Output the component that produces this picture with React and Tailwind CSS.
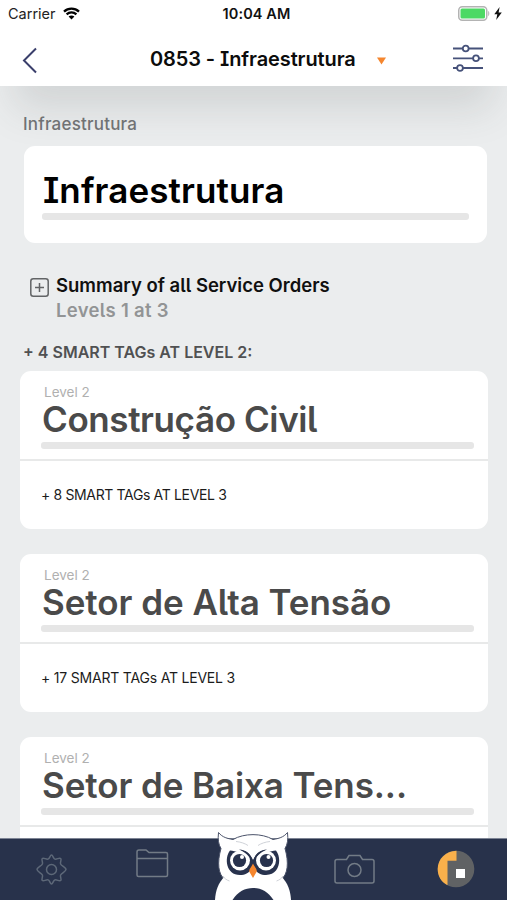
import React from "react";

const plex = "font-['Inter','Noto_Sans',sans-serif] [font-feature-settings:'cv08','cv05'] whitespace-nowrap";
const sys = "font-['Inter','Liberation_Sans',sans-serif] whitespace-nowrap";

function StatusBar() {
  return (
    <div className="grid h-7 grid-cols-3 items-center pl-2 pr-[5px]">
      <div className="flex items-center gap-[7px]">
        <span className={`${sys} text-[14.5px] leading-7 text-[#222]`}>Carrier</span>
        <svg className="-mt-px" width="17" height="13" viewBox="0 0 17 13" fill="none" stroke="#000" strokeWidth="2.3">
          <path d="M1 4.6C5.2.6 11.8.6 16 4.6M3.6 7.4c2.8-2.6 7-2.6 9.8 0" />
          <path d="M5.6 9.6c1.7-1.5 4.1-1.5 5.8 0L8.5 12.5z" fill="#000" stroke="none" />
        </svg>
      </div>
      <div className={`${sys} pl-[3px] text-center text-[14.5px] font-semibold leading-7 tracking-[0.1px] text-[#111]`}>10:04 AM</div>
      <div className="-mt-[2px] flex items-center justify-end gap-1">
        <svg width="32" height="15" viewBox="0 0 32 15">
          <rect x=".75" y=".75" width="28" height="13.5" rx="3.5" fill="#fff" stroke="#b3b3b3" strokeWidth="1.5" />
          <rect x="2.5" y="2.5" width="24.5" height="10" rx="1.5" fill="#4cd964" />
          <path d="M30.2 5c1.5.5 1.5 4.500 0 5z" fill="#b3b3b3" />
        </svg>
        <svg width="8" height="13" viewBox="0 0 8 13"><path d="M5.600 0 .3 7.300h3L2.200 13 7.800 5.500H4.600z" fill="#111" /></svg>
      </div>
    </div>
  );
}

function Header() {
  return (
    <header className="relative z-10 h-[86px] shrink-0 bg-white shadow-[0_36px_40px_-14px_rgba(60,66,70,0.15)]">
      <StatusBar />
      <div className="flex h-[58px] items-center">
        <svg className="ml-[22px] mt-[7px] w-4" height="27" viewBox="0 0 16 27" fill="none" stroke="#3a3f6b" strokeWidth="2">
          <path d="M14 1.500 2 13.500l12 12" />
        </svg>
        <h1 className={`${plex} ml-28 mt-1 w-[206px] text-[20px] font-semibold leading-7 tracking-[-0.1px] text-[#0c0c0c]`}>0853 - Infraestrutura</h1>
        <svg className="ml-[21px] mt-[8px]" width="9" height="8" viewBox="0 0 9 8"><path d="M0 .5h9L4.500 7.500z" fill="#f5862e" /></svg>
        <svg className="ml-[67px] mt-[2px] w-[30px]" height="28" viewBox="0 0 30 28" fill="#fff" stroke="#46527a" strokeWidth="1.800">
          <path d="M0 4.500h30M0 14.300h30M0 24h30" />
          <circle cx="12.700" cy="4.500" r="2.900" />
          <circle cx="23" cy="14.300" r="2.900" />
          <circle cx="7" cy="24" r="2.900" />
        </svg>
      </div>
    </header>
  );
}

function Card({ title, tags, spacing, tagSpacing }) {
  return (
    <section className="h-[158px] shrink-0 rounded-[11px] bg-white">
      <div className="h-[90px] border-b-2 border-[#e8e9e9] pl-[21px] pr-[14px] pt-[13px]">
        <div className={`${sys} h-[14px] pl-[3px] text-[13.5px] leading-[17px] text-[#b0b0b0]`}>Level 2</div>
        <div className={`${plex} h-[44px] pl-px text-[35px] font-semibold leading-[42px] text-[#4a4a4a] ${spacing}`}>{title}</div>
        <div className="h-[7px] rounded-[3px] bg-[#e6e6e6]" />
      </div>
      <div className={`${plex} pl-[21px] pt-[22px] text-[14px] leading-6 text-[#1c1c1c] ${tagSpacing}`}>{tags}</div>
    </section>
  );
}

function OwlEye() {
  return (
    <g>
      <path d="M16 20.500C10 28 12 45 26 45c5 0 9-2 11-5.500l2-3v-6C37 25 33 21 27 20c4 4 0 2-11 .5z" fill="#28324d" />
      <circle cx="26" cy="30.500" r="10" fill="#fff" />
      <path d="M25 19.500c7 .5 11.500 4 14 11v5c-1.500-7-5-12-14-16z" fill="#28324d" />
      <circle cx="25.500" cy="30.500" r="6.600" fill="#28324d" />
    </g>
  );
}

function Owl() {
  return (
    <svg width="78" height="70" viewBox="0 0 78 70">
      <path d="M4.500 2.500c4 5 9 6 14.500 7 11-6.500 29-6.500 40 0 5.500-1 10.500-2 14.500-7 .8 7 0 12-2.500 16 4 14 3 26-4 31H11C4 44.500 3 32.500 7 18.500c-2.500-4-3.300-9-2.500-16z" fill="#fff" stroke="#4b536a" strokeWidth="1" />
      <path d="M11 46C4 53 1.500 61 1 70h76c-.5-9-3-17-10-24z" fill="#fff" />
      <path d="M18.500 70C24 61.500 31 58 39 58s15 3.500 20.500 12z" fill="#28324d" />
      <OwlEye />
      <g transform="translate(78 0) scale(-1 1)"><OwlEye /></g>
      <circle cx="28" cy="27" r="2" fill="#fff" />
      <circle cx="54.500" cy="27" r="2" fill="#fff" />
      <path d="M39 33.500c1 3 4 5 3.800 8L39 48l-3.800-6.500c-.2-3 2.800-5 3.800-8z" fill="#f5862e" />
      <path d="M9 46c1.500 2.500 3.500 4 6.500 5M69 46c-1.500 2.500-3.500 4-6.500 5M22 11.500c5 .5 9 2 12 4M56 11.500c-5 .5-9 2-12 4" fill="none" stroke="#c3c6ce" strokeWidth=".8" />
    </svg>
  );
}

function TabBar() {
  return (
    <nav className="relative z-10 h-[62px] shrink-0 border-t border-[#7d8494] bg-[#28324b]">
      <div className="flex h-full items-start">
        <svg className="ml-9 mt-[15px]" width="31" height="31" viewBox="0 0 31 31" fill="none" stroke="#5d6878" strokeWidth="1.500" strokeLinejoin="round">
          <path d="M15.500 1c1.500 0 1.600 3.600 3.400 4.100 1.900.5 4.600-1.700 5.800-.6 1.200 1.200-.9 3.800-.1 5.500.9 1.900 5.400 3.600 5.400 5.500s-4.500 3.600-5.400 5.500c-.8 1.700 1.300 4.300.1 5.500-1.200 1.100-3.900-1.100-5.800-.6-1.800.5-1.900 4.100-3.400 4.100s-1.600-3.600-3.400-4.100c-1.900-.5-4.600 1.700-5.800.6-1.200-1.200.9-3.800.1-5.500C5.500 19.100 1 17.400 1 15.500s4.500-3.600 5.400-5.500c.8-1.700-1.300-4.300-.1-5.500 1.200-1.100 3.900 1.100 5.800.6 1.800-.5 1.900-4.100 3.400-4.100z" />
          <circle cx="15.500" cy="15.500" r="5" />
        </svg>
        <svg className="ml-[69px] mt-[10px]" width="33" height="29" viewBox="0 0 33 29" fill="none" stroke="#727b86" strokeWidth="1.500">
          <path d="M1 26V3q0-2 2-2h7l3 2.500h17q1.500 0 1.500 1.500v21q0 1.500-1.500 1.500H2.500Q1 27.500 1 26zM1 9.500h30.500" />
        </svg>
        <div className="ml-[45px] -mt-[9px] h-[70px] w-[78px]"><Owl /></div>
        <svg className="ml-[42px] mt-[15px]" width="41" height="31" viewBox="0 0 41 31" fill="none" stroke="#727b86" strokeWidth="1.500">
          <path d="M3 5.500h9.500l2.500-4h11l2.500 4H38q2 0 2 2V27q0 2-2 2H3q-2 0-2-2V7.500q0-2 2-2z" />
          <circle cx="20.500" cy="16" r="6.500" />
        </svg>
        <svg className="ml-[62px] mt-[11px]" width="38" height="38" viewBox="0 0 38 38">
          <circle cx="19" cy="19" r="18.300" fill="#606264" />
          <path d="M19.500.7v10h-9v24.500C4 32 .7 26 .7 19 .7 9 9 .7 19.500.7z" fill="#f9b04b" />
          <rect x="19" y="19" width="9" height="9" fill="#fff" />
        </svg>
      </div>
    </nav>
  );
}

export default function App() {
  return (
    <div className="flex h-[900px] w-[507px] flex-col overflow-hidden bg-[#ebedee]">
      <Header />
      <main className="flex min-h-0 flex-1 flex-col overflow-hidden pl-5 pr-[19px]">
        <div className="relative z-20 flex shrink-0 flex-col">
          <div className={`${sys} mt-[24.500px] h-[35px] pl-[3px] text-[17px] font-medium leading-[26px] tracking-[0.2px] text-[#707274]`}>Infraestrutura</div>
          <section className="ml-1 mr-px h-[97.500px] rounded-[11px] bg-white px-[18px] pt-[22.500px]">
            <div className={`${plex} h-[45px] pl-px text-[35px] font-semibold leading-[44px] tracking-[0.1px] text-black`}>Infraestrutura</div>
            <div className="h-[7px] rounded-[3px] bg-[#e6e6e6]" />
          </section>
          <div className="mt-[30px] flex gap-[7px] pl-[10px]">
            <svg className="mt-[5px]" width="19" height="19" viewBox="0 0 19 19" fill="none" stroke="#626466" strokeWidth="1.500">
              <rect x=".8" y=".8" width="17.400" height="17.400" rx="2.500" />
              <path d="M5 9.500h9M9.500 5v9" />
            </svg>
            <div className={`${plex} text-[18.500px] font-semibold leading-[25px]`}>
              <div className="text-[#101010]">Summary of all Service Orders</div>
              <div className="tracking-[0.300px] text-[#929495]">Levels 1 at 3</div>
            </div>
          </div>
          <div className={`${plex} mt-[17px] h-[31px] pl-[3px] text-[16px] font-semibold leading-6 text-[#505152]`}>+ 4 SMART TAGs AT LEVEL 2:</div>
        </div>
        <div className="flex flex-col gap-[25px]">
          <Card title="Construção Civil" tags="+ 8 SMART TAGs AT LEVEL 3" spacing="tracking-[-0.400px]" tagSpacing="tracking-[-0.350px]" />
          <Card title="Setor de Alta Tensão" tags="+ 17 SMART TAGs AT LEVEL 3" spacing="tracking-[-0.050px]" tagSpacing="tracking-[-0.200px]" />
          <Card title="Setor de Baixa Tens..." tags="+ 3 SMART TAGs AT LEVEL 3" spacing="tracking-[-0.100px]" tagSpacing="tracking-[-0.350px]" />
        </div>
      </main>
      <TabBar />
    </div>
  );
}
